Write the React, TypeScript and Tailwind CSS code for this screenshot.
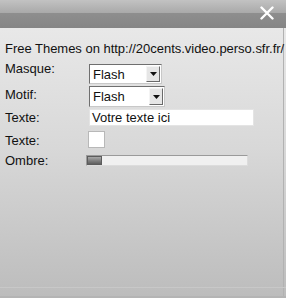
const Select = ({ value, w }: { value: string; w: string }) => {
  return (
    <div className={`flex h-full ${w} border border-t-[#6f6f6f] border-l-[#6f6f6f] border-r-[#c8c8c8] border-b-[#c8c8c8] bg-white`}>
      <div className="flex-1 pl-[3px] leading-[19px] text-[13px] text-[#111]">{value}</div>
      <div className="m-[1px] flex w-[14px] items-center justify-center border border-t-[#f4f4f4] border-l-[#f4f4f4] border-r-[#6a6a6a] border-b-[#6a6a6a] bg-[#e6e6e6]">
        <svg width="7" height="4" viewBox="0 0 7 4">
          <path d="M0 0 H7 L3.5 4 Z" fill="#111" />
        </svg>
      </div>
    </div>
  );
};

export default function App() {
  return (
    <div
      className="relative h-[298px] w-[286px] overflow-hidden bg-gradient-to-b from-[#ececec] via-[#d8d8d8] to-[#bcbcbc] text-[13px] text-[#111]"
      style={{ fontFamily: '"Liberation Sans", Arial, sans-serif' }}
    >
      {/* bords */}
      <div className="absolute right-[2px] top-[28px] h-[270px] w-[1px] bg-[#b2b2b2]" />
      <div className="absolute bottom-[10px] left-0 h-[1px] w-[286px] bg-[#c8c8c8]" />
      <div className="absolute bottom-0 left-0 h-[2px] w-[286px] bg-[#b4b4b4]" />

      {/* barre de titre */}
      <div className="relative h-[28px] bg-[linear-gradient(to_bottom,#c2c2c2_0px,#a9a9a9_13px,#8e8e8e_13px,#858585_28px)]">
        <svg className="absolute left-[260px] top-[6px]" width="14" height="14" viewBox="0 0 14 14">
          <path d="M1.5 1.5 L12.5 12.5 M12.5 1.5 L1.5 12.5" stroke="#fff" strokeWidth="2.4" strokeLinecap="round" />
        </svg>
      </div>

      <div className="relative pl-[5px] pt-[13px]">
        <div className="whitespace-nowrap leading-[15px] tracking-[-0.02px]">Free Themes on http://20cents.video.perso.sfr.fr/</div>

        <div className="mt-[4px] flex h-[26px] items-start">
          <div className="mt-[1px] w-[84px] leading-[15px]">Masque:</div>
          <div className="mt-[4px] h-[20px]">
            <Select value="Flash" w="w-[73px]" />
          </div>
        </div>

        <div className="flex h-[23px] items-start">
          <div className="mt-[1px] w-[84px] leading-[15px]">Motif:</div>
          <div className="h-[21px]">
            <Select value="Flash" w="w-[76px]" />
          </div>
        </div>

        <div className="flex h-[22px] items-start">
          <div className="w-[84px] leading-[17px]">Texte:</div>
          <div className="h-[17px] w-[165px] border border-[#e4e4e4] bg-white pl-[2px] leading-[15px]">Votre texte ici</div>
        </div>

        <div className="flex h-[21px] items-start">
          <div className="mt-[2px] w-[84px] leading-[15px]">Texte:</div>
          <div className="-ml-[1px] h-[17px] w-[17px] border border-[#b8b8b8] bg-white" />
        </div>

        <div className="flex h-[20px] items-start">
          <div className="mt-[1px] w-[81px] leading-[15px]">Ombre:</div>
          <div className="mt-[3px] flex h-[11px] w-[162px] border border-t-[#9a9a9a] border-l-[#9a9a9a] border-r-[#dcdcdc] border-b-[#dcdcdc] bg-[#f0f0f0]">
            <div className="h-full w-[15px] border border-[#5c5c5c] bg-gradient-to-b from-[#a8a8a8] to-[#5e5e5e]" />
          </div>
        </div>
      </div>
    </div>
  );
}
